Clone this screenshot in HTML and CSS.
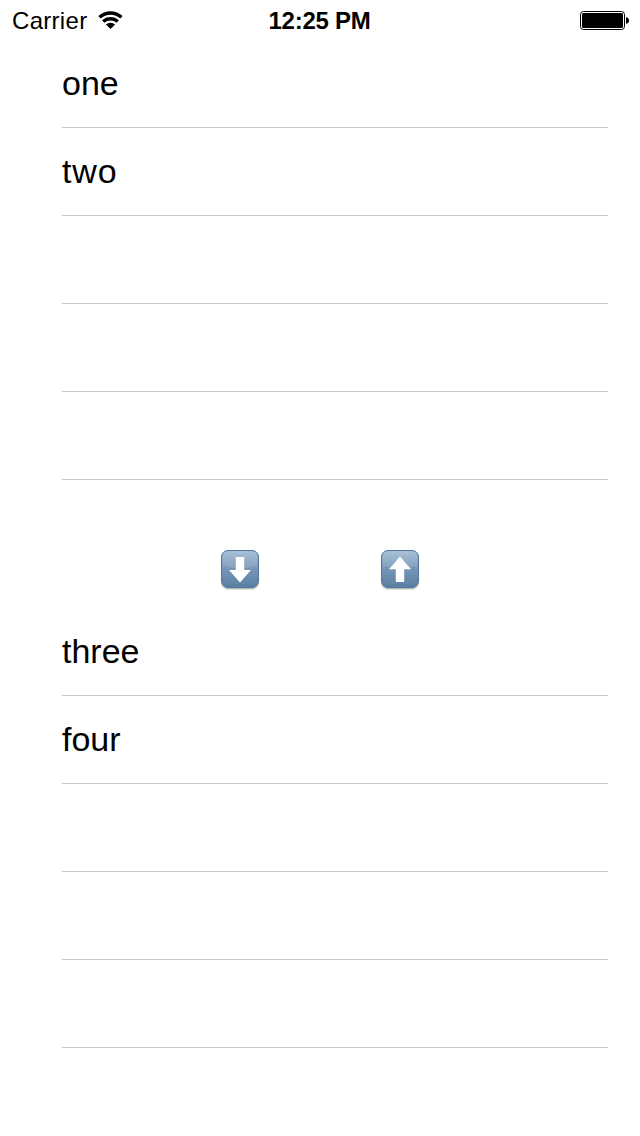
FILE: index.html
```html
<!DOCTYPE html>
<html lang="en">
<head>
<meta charset="utf-8">
<title>Lists</title>
<link rel="stylesheet" href="styles.css">
</head>
<body>
<header class="status">
  <div class="status-left">
    <span class="carrier">Carrier</span>
    <svg class="wifi" width="25" height="18" viewBox="0 0 25 18">
      <g fill="none" stroke="#000" stroke-width="3.4">
        <path d="M1.5 6.2a16.4 16.4 0 0 1 22 0"/>
        <path d="M5.2 10.6a10.6 10.6 0 0 1 14.6 0"/>
      </g>
      <path d="M7.9 13.6a6.6 6.6 0 0 1 9.2 0L12.5 17.9z"/>
    </svg>
  </div>
  <span class="time">12:25 PM</span>
  <svg class="battery" width="50" height="20" viewBox="0 0 50 20">
    <rect x=".5" y=".5" width="44" height="18" rx="3" fill="#fff" stroke="#000"/>
    <rect x="2" y="2" width="41" height="15" rx="1.5"/>
    <path d="M46 6.2c2 0 3 1.5 3 3.3s-1 3.3-3 3.3z"/>
  </svg>
</header>
<main>
  <ul class="list">
    <li class="row">one</li>
    <li class="row wide">two</li>
    <li class="row"></li>
    <li class="row"></li>
    <li class="row"></li>
  </ul>
  <div class="actions">
    <button class="move" aria-label="Move down">
      <svg width="40" height="42" viewBox="0 0 40 42">
        <defs>
          <linearGradient id="face" x2="0" y2="1">
            <stop offset="0" stop-color="#a3bdd6"/>
            <stop offset=".45" stop-color="#7797b8"/>
            <stop offset="1" stop-color="#5a7fa3"/>
          </linearGradient>
          <linearGradient id="gloss" x2="0" y2="1">
            <stop offset="0" stop-color="#fff" stop-opacity=".08"/>
            <stop offset="1" stop-color="#fff" stop-opacity=".1"/>
          </linearGradient>
        </defs>
        <rect x="1" y="3" width="38" height="38" rx="7" fill="#e2e2e2"/>
        <rect x="1.5" y="3" width="37" height="37" rx="7" fill="#b4b8bd"/>
        <rect x="1.5" y="1.5" width="37" height="37" rx="6.5" fill="url(#face)" stroke="#54779a"/>
        <path d="M3 17V8q0-5 5-5h24q5 0 5 5v9q-17 5-34 0z" fill="url(#gloss)"/>
        <path d="M15.8 8h8.4v13H31L20 33.5 9 21h6.8z" fill="#fff"/>
      </svg>
    </button>
    <button class="move" aria-label="Move up">
      <svg width="40" height="42" viewBox="0 0 40 42">
        <rect x="1" y="3" width="38" height="38" rx="7" fill="#e2e2e2"/>
        <rect x="1.5" y="3" width="37" height="37" rx="7" fill="#b4b8bd"/>
        <rect x="1.5" y="1.5" width="37" height="37" rx="6.5" fill="url(#face)" stroke="#54779a"/>
        <path d="M3 17V8q0-5 5-5h24q5 0 5 5v9q-17 5-34 0z" fill="url(#gloss)"/>
        <path d="M15.8 33h8.4V20.3H31L20 7.5 9 20.3h6.8z" fill="#fff"/>
      </svg>
    </button>
  </div>
  <ul class="list">
    <li class="row">three</li>
    <li class="row">four</li>
    <li class="row"></li>
    <li class="row"></li>
    <li class="row"></li>
  </ul>
</main>
</body>
</html>
```
FILE: styles.css
```css
* { box-sizing: border-box; }
body {
  margin: 0;
  min-height: 1136px;
  background: #fff;
  color: #000;
  font-family: "Liberation Sans", Arial, sans-serif;
}
.status {
  display: grid;
  grid-template-columns: 1fr auto 1fr;
  align-items: center;
  height: 40px;
  padding: 0 10px 0 12px;
  font-size: 24px;
  line-height: 38px;
}
.status-left { display: flex; align-items: center; gap: 11px; }
.carrier { padding-top: 2px; letter-spacing: .3px; }
.wifi { display: block; }
.time { padding-top: 2px; margin-left: -3px; font-weight: 700; letter-spacing: -.25px; }
.battery { justify-self: end; display: block; margin-top: 2px; }
.list {
  list-style: none;
  margin: 0;
  padding: 0 32px 0 62px;
}
.row {
  height: 88px;
  border-bottom: 1px solid #c8c7cc;
  font-size: 34px;
  line-height: 87px;
}
.wide { letter-spacing: .9px; }
.actions {
  display: flex;
  justify-content: center;
  gap: 120px;
  height: 128px;
  padding-top: 69px;
}
.move {
  width: 40px;
  height: 42px;
  padding: 0;
  border: 0;
  background: none;
}
.move svg { display: block; }
```
